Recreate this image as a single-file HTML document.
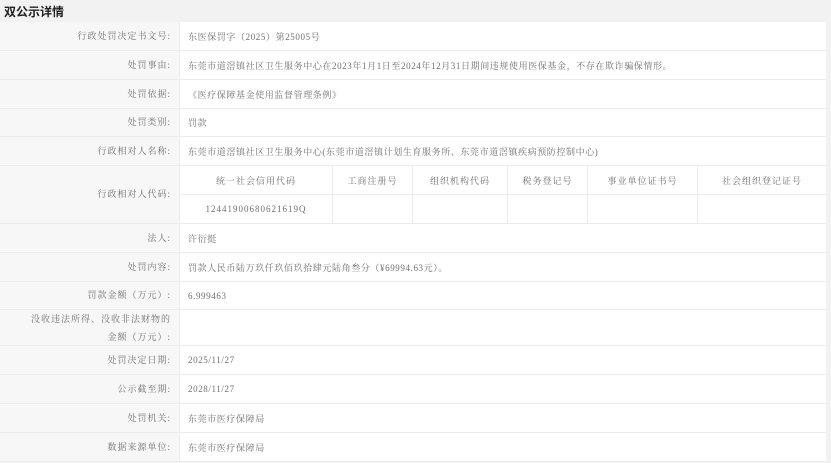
<!DOCTYPE html><html><head><meta charset="utf-8"><style>
*{margin:0;padding:0;box-sizing:border-box}
body{width:831px;height:463px;background:#f2f2f2;font-family:"Liberation Serif","Noto Serif CJK SC",serif;color:#707070;font-size:9px;position:relative;overflow:hidden}
.h{position:absolute;left:4px;top:3px;font:bold 12px "Liberation Sans","Noto Sans CJK SC",sans-serif;color:#222}
.t{position:absolute;left:0;top:22px;width:826px;background:#fff}
.r{display:flex;border-bottom:1px solid #ececec}
.l{width:180px;background:#f7f7f7;border-right:1px solid #ececec;text-align:right;padding-right:8px;display:flex;align-items:center;justify-content:flex-end;letter-spacing:1px;line-height:19px}
.v{flex:1;display:flex;align-items:center;padding-left:8px;letter-spacing:.6px}
.s{flex:1;display:flex;flex-direction:column}
.sr{display:flex;height:29px}
.sr+.sr{border-top:1px solid #ececec}
.sr div{display:flex;align-items:center;justify-content:center;border-right:1px solid #ececec;letter-spacing:1px}
</style></head><body>
<div class="h">双公示详情</div>
<div class="t">
<div class="r" style="height:29px"><div class="l">行政处罚决定书文号:</div><div class="v">东医保罚字（2025）第25005号</div></div>
<div class="r" style="height:29px"><div class="l">处罚事由:</div><div class="v">东莞市道滘镇社区卫生服务中心在2023年1月1日至2024年12月31日期间违规使用医保基金，不存在欺诈骗保情形。</div></div>
<div class="r" style="height:29px"><div class="l">处罚依据:</div><div class="v">《医疗保障基金使用监督管理条例》</div></div>
<div class="r" style="height:28px"><div class="l">处罚类别:</div><div class="v">罚款</div></div>
<div class="r" style="height:29px"><div class="l">行政相对人名称:</div><div class="v">东莞市道滘镇社区卫生服务中心(东莞市道滘镇计划生育服务所、东莞市道滘镇疾病预防控制中心)</div></div>
<div class="r" style="height:58px"><div class="l">行政相对人代码:</div><div class="s">
<div class="sr"><div style="width:153px">统一社会信用代码</div><div style="width:80px">工商注册号</div><div style="width:95px">组织机构代码</div><div style="width:80px">税务登记号</div><div style="width:110px">事业单位证书号</div><div style="flex:1;border-right:none">社会组织登记证号</div></div>
<div class="sr"><div style="width:153px">12441900680621619Q</div><div style="width:80px"></div><div style="width:95px"></div><div style="width:80px"></div><div style="width:110px"></div><div style="flex:1;border-right:none"></div></div>
</div></div>
<div class="r" style="height:29px"><div class="l">法人:</div><div class="v">许衍挺</div></div>
<div class="r" style="height:29px"><div class="l">处罚内容:</div><div class="v">罚款人民币陆万玖仟玖佰玖拾肆元陆角叁分（¥69994.63元）。</div></div>
<div class="r" style="height:28px"><div class="l">罚款金额（万元）:</div><div class="v">6.999463</div></div>
<div class="r" style="height:36px"><div class="l" style="line-height:18px">没收违法所得、没收非法财物的<br>金额（万元）:</div><div class="v"></div></div>
<div class="r" style="height:29px"><div class="l">处罚决定日期:</div><div class="v">2025/11/27</div></div>
<div class="r" style="height:29px"><div class="l">公示截至期:</div><div class="v">2028/11/27</div></div>
<div class="r" style="height:29px"><div class="l">处罚机关:</div><div class="v">东莞市医疗保障局</div></div>
<div class="r" style="height:29px"><div class="l">数据来源单位:</div><div class="v">东莞市医疗保障局</div></div>
</div>
</body></html>
